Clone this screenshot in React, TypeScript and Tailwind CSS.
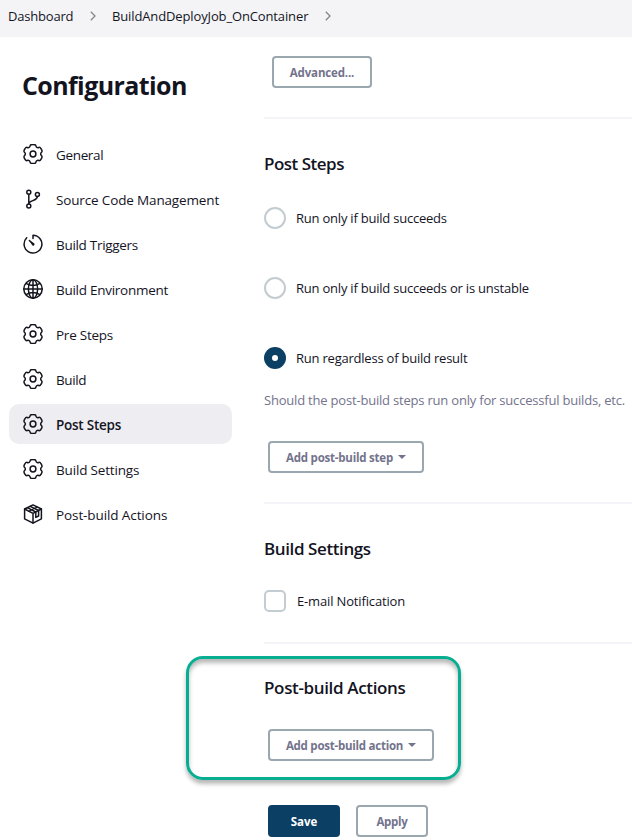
import type { ReactNode } from 'react';

function Icon({ children, width = 1.5 }: { children: ReactNode; width?: number }) {
  return (
    <svg viewBox="0 0 20 20" className="size-5 shrink-0" fill="none" stroke="currentColor" strokeWidth={width} strokeLinejoin="round" strokeLinecap="round">
      {children}
    </svg>
  );
}

// Six-lobed gear outline: two shoulder points and two valley points per lobe,
// smoothed with quadratic curves through the midpoints.
function gearOutline() {
  const points: [number, number][] = [];
  for (let lobe = 0; lobe < 6; lobe++) {
    for (const [offset, radius] of [[-15, 9.9], [15, 9.9], [23, 7.7], [37, 7.7]]) {
      const angle = ((lobe * 60 + offset) * Math.PI) / 180;
      points.push([10 + radius * Math.sin(angle), 10 - radius * Math.cos(angle)]);
    }
  }
  const mid = (i: number) => {
    const a = points[i % points.length];
    const b = points[(i + 1) % points.length];
    return `${((a[0] + b[0]) / 2).toFixed(2)} ${((a[1] + b[1]) / 2).toFixed(2)}`;
  };
  let d = `M${mid(0)}`;
  for (let i = 1; i <= points.length; i++) {
    const p = points[i % points.length];
    d += `Q${p[0].toFixed(2)} ${p[1].toFixed(2)} ${mid(i)}`;
  }
  return `${d}Z`;
}

const gearPath = gearOutline();

const gear = (
  <Icon>
    <path d={gearPath} />
    <circle cx="10" cy="10" r="2.9" />
  </Icon>
);

const branch = (
  <Icon>
    <circle cx="5.8" cy="3.2" r="2" />
    <circle cx="5.8" cy="17" r="2" />
    <circle cx="14.4" cy="5.4" r="2" />
    <path d="M5.8 5.2 V15 C6 10.6 14.2 12.6 14.4 7.4" />
  </Icon>
);

const timer = (
  <Icon>
    <path d="M10 4.6 V1.2 A8.9 8.9 0 1 1 3.7 3.8" />
    <path d="M6.2 6.3 L11.1 9.2 A1.3 1.3 0 0 1 9.2 11.2 Z" fill="currentColor" stroke="none" />
    <path d="M6.4 6.5 L10 10" strokeWidth="1.5" />
  </Icon>
);

const globe = (
  <Icon width={1.5}>
    <circle cx="10" cy="10" r="9.2" />
    <ellipse cx="10" cy="10" rx="4.6" ry="9.2" />
    <path d="M10 0.8 V19.2 M0.8 10 H19.2 M3.5 4.6 Q10 8.4 16.5 4.6 M3.5 15.4 Q10 11.6 16.5 15.4" />
  </Icon>
);

const parcel = (
  <Icon>
    <path d="M10 0.9 L18.4 5 V14.8 L10 19.1 L1.6 14.8 V5 Z" />
    <path d="M1.6 5 L10 9.4 L18.4 5 M10 9.4 V19" />
    <path d="M4.4 3.7 L12.8 8 V13.4 L15.6 12 V6.5 L7.2 2.3" />
    <path d="M5.8 7.2 L14.2 3" strokeWidth="1.1" />
  </Icon>
);

const items: { label: string; icon: ReactNode; tracking: string; active?: boolean }[] = [
  { label: 'General', icon: gear, tracking: 'tracking-[-0.35px]' },
  { label: 'Source Code Management', icon: branch, tracking: 'tracking-[-0.15px]' },
  { label: 'Build Triggers', icon: timer, tracking: 'tracking-[-0.3px]' },
  { label: 'Build Environment', icon: globe, tracking: 'tracking-[-0.27px]' },
  { label: 'Pre Steps', icon: gear, tracking: 'tracking-[-0.25px]' },
  { label: 'Build', icon: gear, tracking: 'tracking-[-0.4px]' },
  { label: 'Post Steps', icon: gear, tracking: 'tracking-[-0.25px]', active: true },
  { label: 'Build Settings', icon: gear, tracking: 'tracking-[-0.17px]' },
  { label: 'Post-build Actions', icon: parcel, tracking: 'tracking-[-0.1px]' },
];

function Chevron() {
  return (
    <svg viewBox="0 0 6 10" className="mb-[2px] h-[10px] w-[6px] shrink-0" fill="none" stroke="#84848f" strokeWidth="1.3">
      <path d="M0.8 0.8 L5 5 L0.8 9.2" />
    </svg>
  );
}

function Caret() {
  return (
    <svg viewBox="0 0 8 4" className="mb-[3px] ml-[5px] h-1 w-2" fill="#73738c">
      <path d="M0 0 H8 L4 4 Z" />
    </svg>
  );
}

function Button({ children, className }: { children: ReactNode; className: string }) {
  return (
    <button className={`flex h-8 items-center justify-center whitespace-nowrap rounded-[4px] border-2 pt-[2px] text-[11.5px] font-bold ${className}`}>
      {children}
    </button>
  );
}

const outline = 'border-[#9ba7af] bg-white text-[#73738c]';

function Radio({ label, checked }: { label: string; checked?: boolean }) {
  return (
    <label className="flex h-[22px] items-center">
      <span className={`flex size-[22px] shrink-0 items-center justify-center rounded-full ${checked ? 'bg-[#0b4064]' : 'border-2 border-[#c3ccd1]'}`}>
        {checked && <span className="size-[6px] rounded-full bg-white" />}
      </span>
      <span className="ml-[10px] mt-[2px] whitespace-nowrap text-[13px] tracking-[-0.22px]">{label}</span>
    </label>
  );
}

function Heading({ children, className }: { children: ReactNode; className: string }) {
  return <h2 className={`h-6 whitespace-nowrap text-[17px] font-semibold leading-6 ${className}`}>{children}</h2>;
}

function Divider() {
  return <div className="h-[2px] w-full bg-[#f3f3f8]" />;
}

export default function App() {
  return (
    <div className="relative h-[840px] w-[632px] overflow-hidden bg-white font-['Open_Sans','Noto_Sans',sans-serif] text-[#14141f]">
      <header className="flex h-[37px] items-center bg-[#f4f4f6] pb-1 pl-2 text-[13px]">
        <span className="w-[82px] tracking-[-0.2px]">Dashboard</span>
        <Chevron />
        <span className="ml-4 w-[213px] tracking-[-0.13px]">BuildAndDeployJob_OnContainer</span>
        <Chevron />
      </header>

      <div className="flex h-[803px]">
        <aside className="w-[264px] shrink-0 pl-[9px] pt-[30px]">
          <h1 className="ml-[13px] h-9 text-[25px] font-bold leading-9 tracking-[-0.6px]">Configuration</h1>
          <nav className="mt-[31px] flex w-[223px] flex-col gap-[5px]">
            {items.map((item) => (
              <a key={item.label} className={`flex h-10 items-center rounded-[10px] pl-[14px] ${item.active ? 'bg-[#eeedf2] font-semibold' : ''}`}>
                {item.icon}
                <span className={`ml-[13px] mt-[3px] whitespace-nowrap text-[13.5px] ${item.tracking}`}>{item.label}</span>
              </a>
            ))}
          </nav>
        </aside>

        <main className="w-[368px] pt-[19px]">
          <Button className={`ml-2 w-[100px] tracking-[-0.15px] ${outline}`}>Advanced...</Button>
          <div className="mt-[29px]"><Divider /></div>
          <Heading className="mt-[33px] tracking-[-0.5px]">Post Steps</Heading>
          <div className="mt-[31px] flex flex-col gap-12">
            <Radio label="Run only if build succeeds" />
            <Radio label="Run only if build succeeds or is unstable" />
            <Radio label="Run regardless of build result" checked />
          </div>
          <p className="mt-[21px] h-5 whitespace-nowrap text-[13px] leading-5 tracking-[-0.2px] text-[#73738c]">
            Should the post-build steps run only for successful builds, etc.
          </p>
          <Button className={`ml-1 mt-[31px] w-[156px] tracking-[-0.22px] ${outline}`}>Add post-build step<Caret /></Button>
          <div className="mt-[29px]"><Divider /></div>
          <Heading className="mt-[33px] tracking-[-0.4px]">Build Settings</Heading>
          <label className="mt-[29px] flex h-[22px] items-center">
            <span className="size-[22px] rounded-[5px] border-2 border-[#c3ccd1]" />
            <span className="ml-[11px] mt-[2px] text-[13px] tracking-[-0.15px]">E-mail Notification</span>
          </label>
          <div className="mt-[30px]"><Divider /></div>
          <Heading className="mt-8 tracking-[-0.35px]">Post-build Actions</Heading>
          <Button className={`ml-1 mt-[29px] w-[166px] tracking-[-0.25px] ${outline}`}>Add post-build action<Caret /></Button>
          <div className="ml-1 mt-11 flex gap-4">
            <Button className="w-[72px] border-[#0b4064] bg-[#0b4064] text-white">Save</Button>
            <Button className={`w-[72px] tracking-[-0.3px] ${outline}`}>Apply</Button>
          </div>
        </main>
      </div>

      <div className="pointer-events-none absolute left-[186px] top-[656px] h-[124px] w-[275px] rounded-[17px] border-[3px] border-[#08ae91] shadow-[0_4px_4px_rgba(0,0,0,0.28),inset_0_4px_4px_rgba(0,0,0,0.28)]" />
    </div>
  );
}
